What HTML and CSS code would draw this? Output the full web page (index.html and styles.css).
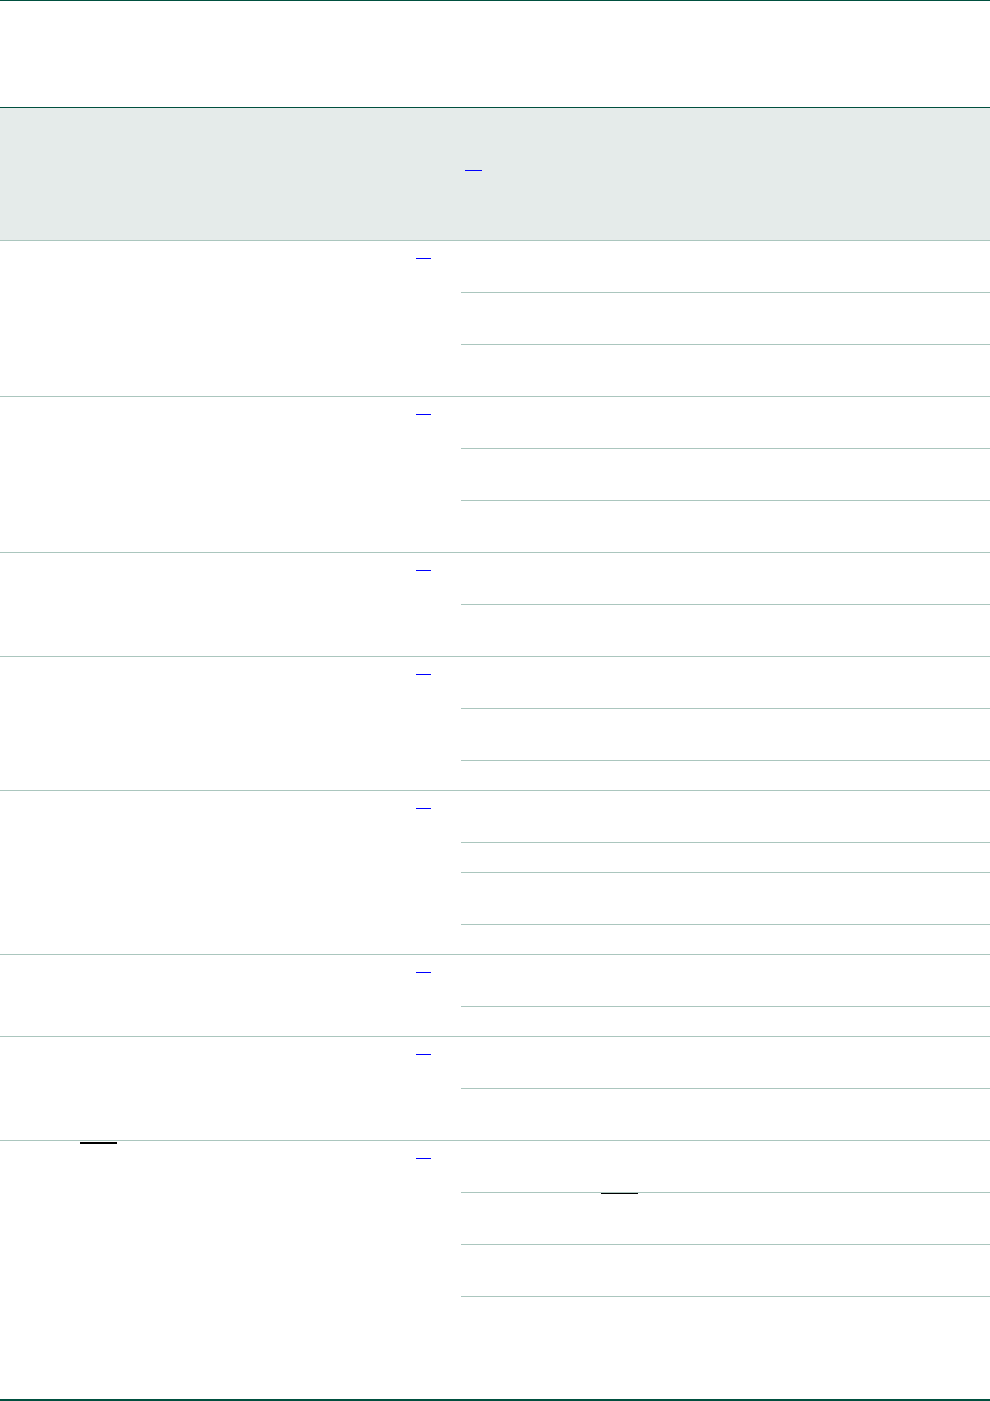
FILE: index.html
```html
<!DOCTYPE html>
<html lang="en">
<head>
<meta charset="utf-8">
<title>Table</title>
<link rel="stylesheet" href="styles.css">
</head>
<body>
<div class="table">
  <div class="title"></div>
  <div class="head">
    <div class="cell"></div>
    <div class="cell"></div>
    <div class="cell head-right"><span class="ref head-ref"></span></div>
  </div>

  <div class="row">
    <div class="cell"></div>
    <div class="cell mid"><span class="ref"></span></div>
    <div class="subs"><div class="sub"></div><div class="sub"></div><div class="sub"></div></div>
  </div>
  <div class="row">
    <div class="cell"></div>
    <div class="cell mid"><span class="ref"></span></div>
    <div class="subs"><div class="sub"></div><div class="sub"></div><div class="sub"></div></div>
  </div>
  <div class="row">
    <div class="cell"></div>
    <div class="cell mid"><span class="ref"></span></div>
    <div class="subs"><div class="sub"></div><div class="sub"></div></div>
  </div>
  <div class="row">
    <div class="cell"></div>
    <div class="cell mid"><span class="ref"></span></div>
    <div class="subs"><div class="sub"></div><div class="sub"></div><div class="sub short"></div></div>
  </div>
  <div class="row">
    <div class="cell"></div>
    <div class="cell mid"><span class="ref"></span></div>
    <div class="subs"><div class="sub"></div><div class="sub short"></div><div class="sub"></div><div class="sub short"></div></div>
  </div>
  <div class="row">
    <div class="cell"></div>
    <div class="cell mid"><span class="ref"></span></div>
    <div class="subs"><div class="sub"></div><div class="sub short"></div></div>
  </div>
  <div class="row">
    <div class="cell"></div>
    <div class="cell mid"><span class="ref"></span></div>
    <div class="subs"><div class="sub"></div><div class="sub"></div></div>
  </div>
  <div class="row">
    <div class="cell left-mark"><span class="mark mark-left"></span></div>
    <div class="cell mid"><span class="ref"></span></div>
    <div class="subs">
      <div class="sub"></div>
      <div class="sub"><span class="mark mark-sub"></span></div>
      <div class="sub"></div>
      <div class="sub tall"></div>
    </div>
  </div>
</div>
</body>
</html>
```

FILE: styles.css
```css
html, body {
  margin: 0;
  padding: 0;
  background: #ffffff;
  font-family: "Liberation Sans", Arial, sans-serif;
}

.table {
  width: 990px;
  border-top: 1px solid #00503f;
  border-bottom: 2px solid #00503f;
}

.title {
  height: 106px;
}

.head {
  display: grid;
  grid-template-columns: 410px 51px 1fr;
  border-top: 1px solid #00503f;
  background: #e5ebea;
  height: 132px;
}

.head-right {
  padding-left: 4px;
  padding-top: 62px;
}

.row {
  display: grid;
  grid-template-columns: 410px 51px 1fr;
  border-top: 1px solid #abc6be;
}

.cell {
  min-width: 0;
}

.mid {
  padding-left: 6px;
  padding-top: 17px;
}

.ref {
  display: block;
  width: 15px;
  height: 1px;
  background: #0000ff;
}

.head-ref {
  width: 17px;
}

.subs {
  display: flex;
  flex-direction: column;
}

.sub {
  height: 51px;
}

.sub + .sub {
  border-top: 1px solid #abc6be;
}

.sub.short {
  height: 29px;
}

.sub.tall {
  height: 102px;
}

.mark {
  display: block;
  width: 37px;
  background: #000000;
}

.mark-left {
  margin-left: 80px;
  margin-top: 1px;
  height: 2px;
}

.mark-sub {
  margin-left: 140px;
  height: 1px;
}
```
